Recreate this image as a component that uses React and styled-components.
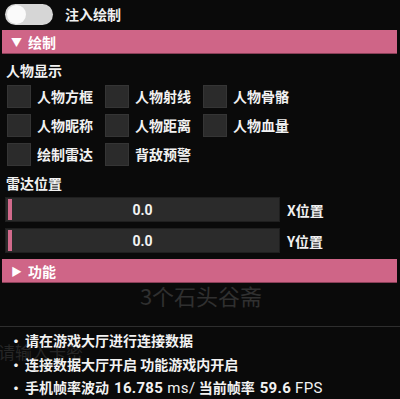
import React from "react";
import styled, { createGlobalStyle } from "styled-components";

const GlobalStyle = createGlobalStyle`
  html, body {
    margin: 0;
    padding: 0;
    background: #0a0a0a;
  }
  body {
    font-family: "Noto Sans CJK SC", "Noto Sans", sans-serif;
    color: #f2f2f2;
    overflow: hidden;
  }
`;

const Page = styled.div`
  width: 400px;
  height: 399px;
  background: #0a0a0a;
  overflow: hidden;
`;

const TopRow = styled.div`
  display: flex;
  align-items: center;
  height: 28px;
  padding-left: 5px;
  gap: 12px;
`;

const Toggle = styled.div`
  width: 48px;
  height: 21px;
  border-radius: 11px;
  background: #d6d6d6;
  display: flex;
  align-items: center;
  padding-left: 2px;
  box-sizing: border-box;
  .knob {
    width: 19px;
    height: 19px;
    border-radius: 50%;
    background: #fafafa;
  }
`;

const Label = styled.span`
  font-size: 14px;
  font-weight: 700;
  color: #f0f0f0;
  white-space: nowrap;
`;

const Header = styled.div`
  margin: ${(p) => p.$mt || 2}px 3px 0 2px;
  height: 24px;
  background: #cf6587;
  border-bottom: 1px solid #8a3f58;
  box-sizing: border-box;
  display: flex;
  align-items: center;
  padding-left: 9px;
  gap: 6px;
  font-size: 14px;
  font-weight: 700;
  color: #fff;
  .arrow {
    font-size: 11px;
  }
`;

const SectionTitle = styled.div`
  font-size: 14px;
  font-weight: 700;
  padding-left: 6px;
  height: 21px;
  line-height: 21px;
  margin-top: ${(p) => p.$mt || 0}px;
`;

const Grid = styled.div`
  display: grid;
  grid-template-columns: 98px 98px 98px;
  grid-auto-rows: 29px;
  padding-left: 7px;
  margin-top: 4px;
`;

const Check = styled.div`
  display: flex;
  align-items: flex-start;
  gap: 6px;
  .box {
    width: 24px;
    height: 23px;
    background: #2b2b2b;
    border: 1px solid #353535;
    box-sizing: border-box;
    flex-shrink: 0;
  }
  span {
    font-size: 14px;
    font-weight: 700;
    line-height: 23px;
  }
`;

const Sliders = styled.div`
  display: flex;
  flex-direction: column;
  gap: 6px;
  padding-left: 5px;
  margin-top: 3px;
`;

const SliderRow = styled.div`
  display: flex;
  align-items: center;
  gap: 7px;
`;

const Track = styled.div`
  width: 275px;
  height: 25px;
  background: #2b2b2b;
  border: 1px solid #1f1f1f;
  box-sizing: border-box;
  display: flex;
  align-items: center;
  .grab {
    width: 4px;
    height: 21px;
    margin-left: 2px;
    background: #d26a8c;
  }
  .val {
    flex: 1;
    text-align: center;
    font-family: "Roboto", "Noto Sans", sans-serif;
    font-weight: 700;
    font-size: 14px;
    margin-right: 6px;
  }
`;

const Lower = styled.div`
  position: relative;
  height: 115px;
`;

const Ghost = styled.div`
  text-align: center;
  color: #303030;
  font-size: 22px;
  font-weight: 400;
  height: 43px;
  line-height: 24px;
  padding-left: 2px;
`;

const Rule = styled.div`
  height: 1px;
  background: #2e2e2e;
`;

const GhostInput = styled.div`
  position: absolute;
  left: -2px;
  top: 56px;
  font-size: 17px;
  color: #262626;
`;

const Bullets = styled.ul`
  list-style: none;
  margin: 0;
  padding: 2px 0 0 9px;
  position: relative;
  li {
    font-size: 14px;
    font-weight: 700;
    height: 23.5px;
    line-height: 23.5px;
    white-space: nowrap;
    display: flex;
    gap: 11px;
  }
  .dot {
    width: 5px;
    text-align: center;
  }
  b {
    font-family: "Roboto", "Noto Sans", sans-serif;
    font-weight: 700;
    font-size: 15px;
    margin: 0 4px 0 5px;
    letter-spacing: 0.3px;
  }
  i {
    font-family: "Roboto", "Noto Sans", sans-serif;
    font-style: normal;
    font-weight: 400;
    font-size: 15px;
    letter-spacing: 0.4px;
  }
`;

const checks = [
  "人物方框",
  "人物射线",
  "人物骨骼",
  "人物昵称",
  "人物距离",
  "人物血量",
  "绘制雷达",
  "背敌预警",
];

export default function App() {
  return (
    <Page>
      <GlobalStyle />
      <TopRow>
        <Toggle>
          <div className="knob" />
        </Toggle>
        <Label>注入绘制</Label>
      </TopRow>
      <Header $mt={2}>
        <span className="arrow">▼</span>绘制
      </Header>
      <SectionTitle $mt={6}>人物显示</SectionTitle>
      <Grid>
        {checks.map((c) => (
          <Check key={c}>
            <div className="box" />
            <span>{c}</span>
          </Check>
        ))}
      </Grid>
      <SectionTitle $mt={1}>雷达位置</SectionTitle>
      <Sliders>
        <SliderRow>
          <Track>
            <div className="grab" />
            <div className="val">0.0</div>
          </Track>
          <Label>X位置</Label>
        </SliderRow>
        <SliderRow>
          <Track>
            <div className="grab" />
            <div className="val">0.0</div>
          </Track>
          <Label>Y位置</Label>
        </SliderRow>
      </Sliders>
      <Header $mt={6}>
        <span className="arrow">▶</span>功能
      </Header>
      <Lower>
        <Ghost>3个石头谷斋</Ghost>
        <Rule />
        <GhostInput>请输入卡密</GhostInput>
        <Bullets>
          <li>
            <span className="dot">·</span>请在游戏大厅进行连接数据
          </li>
          <li>
            <span className="dot">·</span>连接数据大厅开启 功能游戏内开启
          </li>
          <li>
            <span className="dot">·</span>
            <span>
              手机帧率波动<b>16.785</b>
              <i>ms/</i> 当前帧率<b>59.6</b>
              <i>FPS</i>
            </span>
          </li>
        </Bullets>
      </Lower>
    </Page>
  );
}
